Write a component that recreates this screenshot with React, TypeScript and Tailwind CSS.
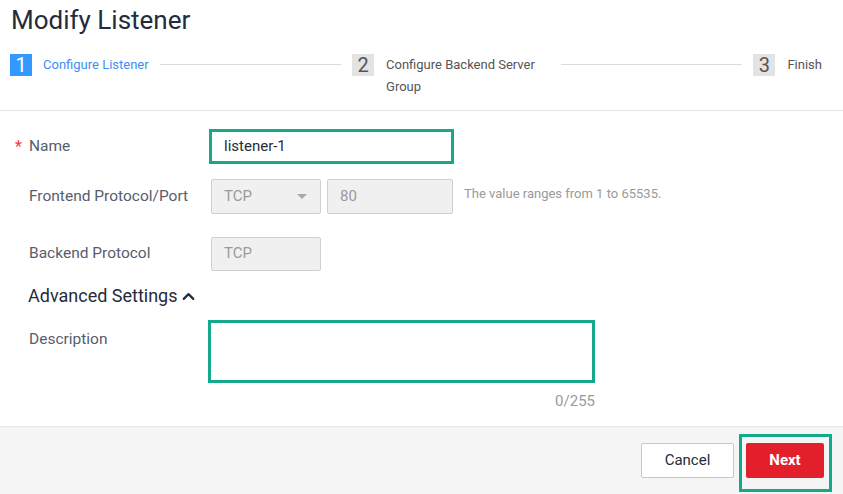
import { ChevronUp } from "lucide-react";

const GREEN = "border-[#14a98b]";

function StepBox({ n, active }: { n: number; active?: boolean }) {
  return (
    <div
      className={
        active
          ? "flex h-[22px] w-[22px] shrink-0 items-center justify-center bg-[#3399ff] text-[20px] text-white"
          : "flex h-[22px] w-[22px] shrink-0 items-center justify-center bg-[#e3e3e3] text-[20px] text-[#555]"
      }
    >
      {n}
    </div>
  );
}

function Steps() {
  return (
    <div className="flex items-start pl-[10px] pr-[21px] pt-[18px]">
      <StepBox n={1} active />
      <span className="ml-[11px] text-[13px] leading-[22px] text-[#3d8ef5]">Configure Listener</span>
      <div className="mx-[11px] mt-[10px] h-px flex-1 bg-[#dcdcdc]" />
      <StepBox n={2} />
      <span className="ml-[12px] w-[164px] text-[13px] leading-[22px] text-[#555]">
        Configure Backend Server Group
      </span>
      <div className="mx-[11px] mt-[10px] h-px flex-1 bg-[#dcdcdc]" />
      <StepBox n={3} />
      <span className="ml-[12px] text-[13px] leading-[22px] text-[#555]">Finish</span>
    </div>
  );
}

function Label({ children, required }: { children: React.ReactNode; required?: boolean }) {
  return (
    <div className="flex w-[182px] shrink-0 items-center text-[15.5px] text-[#575d6c]">
      {required && <span className="-ml-[14px] w-[14px] text-[16px] text-[#f0403a]">*</span>}
      {children}
    </div>
  );
}

export default function App() {
  return (
    <div className="flex h-[494px] w-[843px] flex-col bg-white font-['Roboto',sans-serif]">
      <h1 className="pl-[11px] pt-[4px] text-[26px] leading-[32px] text-[#252b3a]">Modify Listener</h1>

      <Steps />

      <div className="mt-[12px] border-b border-[#e3e3e3]" />

      <div className="flex flex-1 flex-col pl-[29px] pt-[18px]">
        <div className="flex h-[35px] items-center">
          <Label required>Name</Label>
          <div className={`-ml-[2px] flex h-[35px] w-[245px] items-center border-[3px] ${GREEN} pl-[12px] text-[15px] text-[#252b3a]`}>
            listener-1
          </div>
        </div>

        <div className="mt-[15px] flex h-[35px] items-center">
          <Label>Frontend Protocol/Port</Label>
          <div className="flex h-[35px] w-[110px] items-center justify-between rounded-[2px] border border-[#d0d0d0] bg-[#f0f0f0] pl-[12px] pr-[13px] text-[15px] text-[#9a9a9a]">
            TCP
            <span className="h-0 w-0 border-x-[5px] border-t-[5px] border-x-transparent border-t-[#a8a8a8]" />
          </div>
          <div className="ml-[6px] flex h-[35px] w-[126px] items-center rounded-[2px] border border-[#d0d0d0] bg-[#f0f0f0] pl-[12px] text-[15px] text-[#9a9a9a]">
            80
          </div>
          <span className="ml-[11px] -mt-[5px] text-[13px] text-[#9a9a9a]">The value ranges from 1 to 65535.</span>
        </div>

        <div className="mt-[22px] flex h-[35px] items-center">
          <Label>Backend Protocol</Label>
          <div className="flex h-[34px] w-[110px] items-center rounded-[2px] border border-[#d0d0d0] bg-[#f0f0f0] pl-[12px] text-[15px] text-[#9a9a9a]">
            TCP
          </div>
        </div>

        <div className="mt-[12px] flex items-center text-[18px] leading-[26px] text-[#252b3a]">
          <span className="-ml-[1px]">Advanced Settings</span>
          <ChevronUp size={19} strokeWidth={2.75} className="ml-[1px] mt-[1px]" />
        </div>

        <div className="mt-[11px] flex">
          <div className="w-[179px] shrink-0 pt-[8px] text-[15.5px] text-[#575d6c]">Description</div>
          <div className={`h-[63px] w-[387px] border-[3px] ${GREEN} bg-white`} />
        </div>
        <div className="mt-[7px] w-[566px] text-right text-[15px] text-[#9a9a9a]">0/255</div>
      </div>

      <div className="flex h-[68px] items-start justify-end border-t border-[#e8e8e8] bg-[#f5f5f5] pr-[11px] pt-[7px]">
        <button className="mt-[9px] h-[35px] w-[93px] rounded-[2px] border border-[#c8c8c8] bg-white text-[15px] text-[#252b3a]">
          Cancel
        </button>
        <div className={`ml-[5px] border-[3px] ${GREEN} pb-[11px] pl-[4px] pr-[5px] pt-[6px]`}>
          <button className="h-[35px] w-[78px] rounded-[2px] bg-[#e31f2c] text-[15px] font-bold text-white">
            Next
          </button>
        </div>
      </div>
    </div>
  );
}
